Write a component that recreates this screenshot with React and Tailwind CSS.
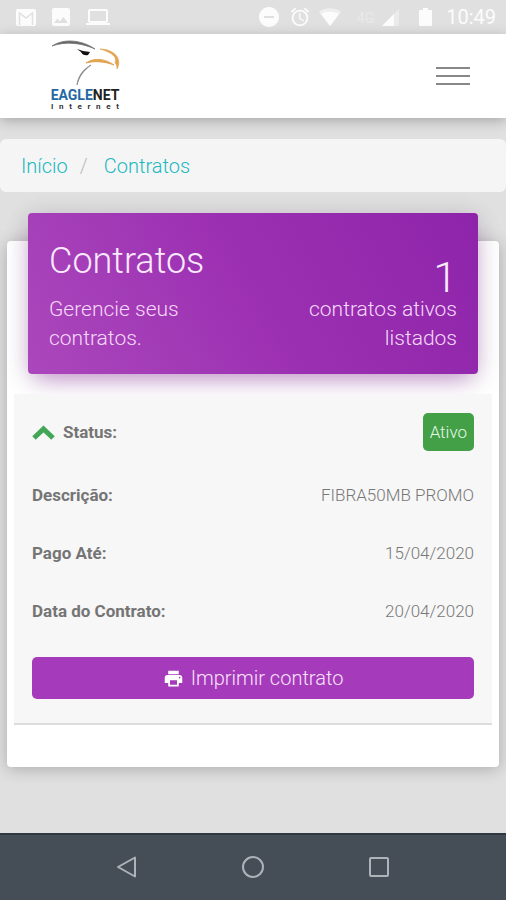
import { MdPrint, MdAlarm, MdLaptop, MdImage, MdDoNotDisturbOn } from "react-icons/md";

const details = [
  { label: "Descrição:", value: "FIBRA50MB PROMO" },
  { label: "Pago Até:", value: "15/04/2020" },
  { label: "Data do Contrato:", value: "20/04/2020" },
];

function StatusBar() {
  return (
    <div className="flex h-[34px] items-center justify-between bg-[#e0e0e0] pl-4 pr-[10px] text-[#fcfcfc]">
      <div className="flex items-center gap-[13px]">
        <svg width="20" height="17" viewBox="0 0 20 17" aria-hidden="true">
          <rect width="20" height="17" rx="2" fill="currentColor" />
          <path d="M3.500 16V4l6.500 5 6.500-5v12" fill="none" stroke="#e0e0e0" strokeWidth="1.500" />
        </svg>
        <MdImage size={24} />
        <MdLaptop size={24} />
      </div>
      <div className="flex items-center">
        <MdDoNotDisturbOn size={24} />
        <MdAlarm size={22} className="ml-2" />
        <svg width="22" height="18" viewBox="0 0 22 18" className="ml-2" aria-hidden="true">
          <path d="M0 4C6-1 16-1 22 4L11 18Z" fill="#efefef" />
          <path d="M2 6C7 3 15 3 20 6L11 18Z" fill="currentColor" />
        </svg>
        <span className="ml-4 self-start pt-[5px] text-[14px] leading-4 text-[#e9e9e9]">4G</span>
        <svg width="17" height="17" viewBox="0 0 17 17" className="ml-2" aria-hidden="true">
          <path d="M17 0v17H0z" fill="#ebebeb" />
          <path d="M12 5v12H0z" fill="currentColor" />
        </svg>
        <svg width="13" height="18" viewBox="0 0 13 18" className="ml-5" aria-hidden="true">
          <path d="M4 0h5v2h3q1 0 1 1v14q0 1-1 1H1q-1 0-1-1V3q0-1 1-1h3z" fill="currentColor" />
        </svg>
        <span className="ml-[14px] text-[20px] leading-6">10:49</span>
      </div>
    </div>
  );
}

function Logo() {
  return (
    <a href="#inicio" className="flex w-[72px] flex-col items-center">
      <svg width="72" height="48" viewBox="0 0 72 48" fill="none" aria-hidden="true">
        <path d="M3 6C15-2 33 0 46 9C33 3 17 1 3 6Z" fill="#666" stroke="#777" strokeWidth=".8" />
        <path d="M28 9L34 11L41 12L39 15Q34 16 32 12Z" fill="#111" />
        <path d="M51 9C64 9 74 18 68 29C68 25 67 24 66 23C69 17 62 12 51 9Z" fill="#e5a34b" stroke="#dda04f" strokeWidth=".6" />
        <path d="M37 23C45 17 57 19 65 25C54 21 45 21 37 23Z" fill="#e5a34b" stroke="#dda04f" strokeWidth=".9" />
        <path d="M42 25C33 30 29 37 28 45C30 37 34 31 42 25Z" fill="#777" stroke="#888" strokeWidth=".8" />
      </svg>
      <span className="text-[14px] font-bold leading-[14px] text-[#222]">
        <span className="text-[#2469a5]">EAGLE</span>NET
      </span>
      <span className="flex w-[68px] justify-between text-[8px] font-bold leading-[10px] text-[#333]">
        {"Internet".split("").map((letter, i) => (
          <span key={i}>{letter}</span>
        ))}
      </span>
    </a>
  );
}

function Header() {
  return (
    <header className="relative flex h-[84px] items-center justify-between bg-white pl-[49px] pr-9 shadow-[0_3px_12px_rgba(0,0,0,0.25)]">
      <Logo />
      <button type="button" aria-label="Menu" className="flex w-[34px] flex-col gap-[6px]">
        <span className="h-[2px] w-full bg-[#888]" />
        <span className="h-[2px] w-full bg-[#888]" />
        <span className="h-[2px] w-full bg-[#888]" />
      </button>
    </header>
  );
}

function Summary() {
  return (
    <section className="mx-[21px] -mt-7 flex justify-between rounded bg-linear-60 from-[#ab47bc] from-0% via-[#9c30b2] via-50% to-[#8e24aa] to-100% px-[21px] pb-[21px] pt-[27px] font-light text-[#f5d9fa] shadow-[0_10px_24px_-8px_rgba(156,39,176,0.5),0_4px_24px_rgba(0,0,0,0.14)]">
      <div className="w-1/2">
        <h1 className="mb-[13px] text-[36px] leading-[42px] text-[#fbeafd]">Contratos</h1>
        <p className="max-w-[160px] text-[21px] leading-[29px]">Gerencie seus contratos.</p>
      </div>
      <div className="flex w-1/2 flex-col items-end pt-5 text-right">
        <span className="text-[43px] leading-[35px] text-[#fbeafd]">1</span>
        <p className="max-w-[160px] text-[21px] leading-[29px]">contratos ativos listados</p>
      </div>
    </section>
  );
}

function Contract() {
  return (
    <section className="mx-[7px] mt-5 border-b-2 border-[#dcdcdc] bg-[#f7f7f7] px-[18px] pb-6 pt-[19px] text-[17px] leading-5">
      <div className="flex h-[38px] items-center justify-between">
        <button type="button" className="flex items-center gap-2 font-bold text-[#757575]">
          <svg width="23" height="15" viewBox="0 0 23 15" fill="none" aria-hidden="true">
            <path d="M2 13L11.500 4L21 13" stroke="#43a556" strokeWidth="5" />
          </svg>
          Status:
        </button>
        <span className="rounded-[5px] bg-[#43a047] px-[7px] py-[9px] font-light text-[#e6f8e7]">Ativo</span>
      </div>
      <dl className="mt-[15px]">
        {details.map((item) => (
          <div key={item.label} className="flex h-[58px] items-center justify-between">
            <dt className="font-bold text-[#757575]">{item.label}</dt>
            <dd className="font-light text-[#777]">{item.value}</dd>
          </div>
        ))}
      </dl>
      <button type="button" className="mt-[17px] flex h-[42px] w-full items-center justify-center gap-[7px] rounded-[5px] bg-[#a53bba] text-[20px] font-light text-[#fae1fd]">
        <MdPrint size={21} className="text-white" />
        Imprimir contrato
      </button>
    </section>
  );
}

function SystemNav() {
  return (
    <div className="mt-auto flex h-[67px] items-center justify-center gap-[102px] border-t-2 border-[#303841] bg-[#454d56] pb-[2px] text-[#adb3b9]">
      <button type="button" aria-label="Voltar">
        <svg width="24" height="24" viewBox="0 0 24 24" fill="none" stroke="currentColor" strokeWidth="2" strokeLinejoin="round">
          <path d="M20 2.500V21.500L3 12Z" />
        </svg>
      </button>
      <button type="button" aria-label="Tela inicial">
        <svg width="24" height="24" viewBox="0 0 24 24" fill="none" stroke="currentColor" strokeWidth="2">
          <circle cx="12" cy="12" r="10" />
        </svg>
      </button>
      <button type="button" aria-label="Recentes">
        <svg width="24" height="24" viewBox="0 0 24 24" fill="none" stroke="currentColor" strokeWidth="2">
          <rect x="3" y="3" width="18" height="18" rx="1" />
        </svg>
      </button>
    </div>
  );
}

export default function App() {
  return (
    <div className="flex min-h-screen flex-col bg-[#e0e0e0] font-[Roboto,sans-serif]">
      <StatusBar />
      <Header />
      <nav aria-label="Navegação" className="mt-[21px] flex h-[53px] items-center rounded-md bg-[#f5f5f5] px-[21px] text-[20px] font-light text-[#20b8c0]">
        <a href="#inicio">Início</a>
        <span className="ml-3 mr-4 text-[#bbb]">/</span>
        <a href="#contratos">Contratos</a>
      </nav>
      <main className="mx-[7px] mb-8 mt-[49px] rounded bg-white pb-[42px] shadow-[0_2px_16px_rgba(0,0,0,0.24)]">
        <Summary />
        <Contract />
      </main>
      <SystemNav />
    </div>
  );
}
